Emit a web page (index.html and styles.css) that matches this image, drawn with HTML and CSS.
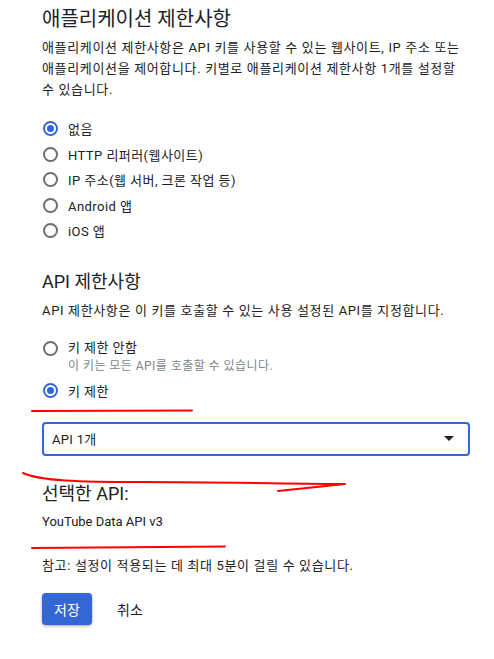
FILE: index.html
```html
<!DOCTYPE html>
<html lang="ko">
<head>
<meta charset="utf-8">
<title>API 키 제한</title>
<link rel="stylesheet" href="styles.css">
</head>
<body>
<div class="page">
  <h1 class="title">애플리케이션 제한사항</h1>
  <p class="desc">애플리케이션 제한사항은 API 키를 사용할 수 있는 웹사이트, IP 주소 또는 애플리케이션을 제어합니다. 키별로 애플리케이션 제한사항 1개를 설정할 수 있습니다.</p>
  <div class="radios app">
    <div class="opt"><span class="radio on"></span><span class="lbl">없음</span></div>
    <div class="opt"><span class="radio"></span><span class="lbl">HTTP 리퍼러(웹사이트)</span></div>
    <div class="opt"><span class="radio"></span><span class="lbl">IP 주소(웹 서버, 크론 작업 등)</span></div>
    <div class="opt"><span class="radio"></span><span class="lbl">Android 앱</span></div>
    <div class="opt"><span class="radio"></span><span class="lbl">iOS 앱</span></div>
  </div>

  <h2 class="section">API 제한사항</h2>
  <p class="desc one">API 제한사항은 이 키를 호출할 수 있는 사용 설정된 API를 지정합니다.</p>
  <div class="radios api">
    <div class="opt tall"><span class="radio"></span><div class="col"><span class="lbl">키 제한 안함</span><span class="sub">이 키는 모든 API를 호출할 수 있습니다.</span></div></div>
    <div class="opt"><span class="radio on"></span><span class="lbl">키 제한</span></div>
  </div>

  <div class="select"><span>API 1개</span><span class="arrow"></span></div>

  <h3 class="chosen">선택한 API:</h3>
  <p class="apiname">YouTube Data API v3</p>
  <p class="note">참고: 설정이 적용되는 데 최대 5분이 걸릴 수 있습니다.</p>
  <div class="actions">
    <button class="save" type="button">저장</button>
    <button class="cancel" type="button">취소</button>
  </div>
</div>
<svg class="marks" width="494" height="659" viewBox="0 0 494 659">
  <path d="M32 411 L192 410.5" />
  <path d="M23 473 C40 481 80 482 140 482 C220 482 300 484 345 484 L278 491" />
  <path d="M32 548 L225 546.5" />
</svg>
</body>
</html>
```

FILE: styles.css
```css
html, body {
  margin: 0;
  padding: 0;
  background: #ffffff;
}
body {
  position: relative;
  width: 494px;
  height: 659px;
  overflow: hidden;
  font-family: Roboto, "Noto Sans CJK KR", sans-serif;
  font-size: 13px;
  color: #202124;
}
.page {
  padding: 0 24px 0 42px;
}
.title {
  margin: 7px 0 0;
  font-size: 20px;
  line-height: 24px;
  font-weight: 400;
}
.desc {
  margin: 6px 0 0;
  line-height: 21px;
  letter-spacing: 0.65px;
}
.radios.app {
  margin-top: 16px;
}
.radios.app .opt {
  height: 25.5px;
}
.opt {
  display: flex;
  align-items: center;
  height: 26px;
}
.lbl {
  letter-spacing: 0.45px;
}
.radio {
  box-sizing: border-box;
  width: 15px;
  height: 15px;
  border: 2px solid #6e6e6e;
  border-radius: 50%;
  margin: 0 10px 0 1px;
  flex: none;
  display: flex;
  align-items: center;
  justify-content: center;
}
.radio.on {
  border-color: #3367d6;
}
.radio.on::after {
  content: "";
  width: 7px;
  height: 7px;
  border-radius: 50%;
  background: #3367d6;
}
.section {
  margin: 26px 0 0;
  font-size: 18px;
  line-height: 24px;
  font-weight: 400;
}
.desc.one {
  margin-top: 6px;
}
.radios.api {
  margin-top: 16px;
}
.opt.tall {
  height: auto;
  align-items: flex-start;
}
.opt.tall .radio {
  margin-top: 4px;
}
.col {
  display: flex;
  flex-direction: column;
}
.col .lbl {
  line-height: 22px;
}
.sub {
  font-size: 12px;
  line-height: 14px;
  color: #80868b;
  letter-spacing: 0.45px;
}
.opt.tall + .opt {
  margin-top: 5px;
}
.select {
  margin-top: 18px;
  box-sizing: border-box;
  height: 34px;
  border: 2px solid #3367d6;
  border-radius: 4px;
  display: flex;
  align-items: center;
  justify-content: space-between;
  padding: 0 14px 0 8px;
  letter-spacing: 0.3px;
}
.arrow {
  width: 0;
  height: 0;
  border-left: 5px solid transparent;
  border-right: 5px solid transparent;
  border-top: 5px solid #202124;
}
.chosen {
  margin: 26px 0 0;
  font-size: 18px;
  line-height: 24px;
  font-weight: 400;
}
.apiname {
  margin: 6px 0 0;
  line-height: 20px;
}
.note {
  margin: 24px 0 0;
  line-height: 20px;
  letter-spacing: 0.65px;
}
.actions {
  margin-top: 17px;
  display: flex;
  align-items: center;
  gap: 17px;
}
.save {
  width: 50px;
  height: 32px;
  border: none;
  border-radius: 4px;
  background: #3367d6;
  color: #ffffff;
  font-family: Roboto, "Noto Sans CJK KR", sans-serif;
  font-size: 14px;
  box-shadow: 0 1px 3px rgba(0, 0, 0, 0.35);
  padding: 0;
}
.cancel {
  border: none;
  background: none;
  color: #202124;
  font-family: Roboto, "Noto Sans CJK KR", sans-serif;
  font-size: 14px;
  padding: 0 8px;
}
.marks {
  position: absolute;
  top: 0;
  left: 0;
  pointer-events: none;
}
.marks path {
  fill: none;
  stroke: #ff0000;
  stroke-width: 2;
  stroke-linecap: round;
  stroke-linejoin: round;
}
```
